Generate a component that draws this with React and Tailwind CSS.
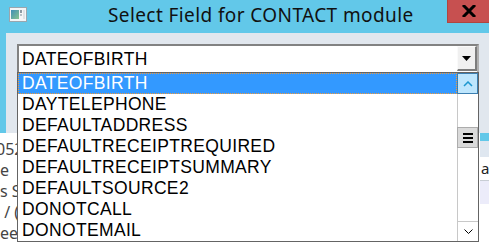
import React from 'react';

const FIELDS = [
  'DATEOFBIRTH',
  'DAYTELEPHONE',
  'DEFAULTADDRESS',
  'DEFAULTRECEIPTREQUIRED',
  'DEFAULTRECEIPTSUMMARY',
  'DEFAULTSOURCE2',
  'DONOTCALL',
  'DONOTEMAIL',
];

const BEHIND = ['052', 'e', 's S', ' / (', 'ee'];

function WindowIcon() {
  return (
    <svg width="18" height="15" viewBox="0 0 18 15">
      <rect x="0.5" y="0.5" width="17" height="14" fill="#f3f5f7" stroke="#9aa6ae" />
      <defs>
        <linearGradient id="g" x1="0" y1="0" x2="1" y2="1">
          <stop offset="0" stopColor="#3f8fb8" />
          <stop offset="1" stopColor="#86c48f" />
        </linearGradient>
      </defs>
      <rect x="2" y="3" width="8" height="9" fill="url(#g)" />
      <rect x="11" y="3" width="2" height="3" fill="#8c9aa3" />
      <rect x="11" y="7" width="2" height="2" fill="#b7c2c8" />
      <rect x="14" y="3" width="2" height="9" fill="#dde3e7" />
    </svg>
  );
}

export default function App() {
  return (
    <div className="relative w-[489px] h-[244px] overflow-hidden bg-white font-['Liberation_Sans',Arial,sans-serif]">
      {/* Dialog */}
      <div className="h-[133px] flex flex-col bg-[#62c8e9]">
        <div className="h-[33px] flex items-start">
          <div className="mt-[7px] ml-[9px]"><WindowIcon /></div>
          <span className="ml-[81px] leading-[30px] text-[19px] tracking-[0.4px] text-[#111] font-['Noto_Sans',sans-serif]">
            Select Field for CONTACT module
          </span>
          <div className="ml-auto w-[42px] h-[23px] bg-[#c75050] border-l border-b border-[#b04640] flex items-center justify-center">
            <svg width="14" height="12" viewBox="0 0 14 12">
              <path d="M2 1 L12 11 M12 1 L2 11" stroke="#000" strokeWidth="3" strokeLinecap="square" />
            </svg>
          </div>
        </div>
        <div className="flex flex-1">
          <div className="w-[6px]" />
          <div className="flex-1 bg-[#e1e7ee] pl-[11px] pt-[11px]">
            <div className="w-[462px] h-[28px] bg-white border-t-2 border-l-2 border-r-2 border-[#828282] border-r-[#b0b0b0] flex items-center">
              <span className="pl-[3px] text-[17.5px] tracking-[0.35px] text-black">DATEOFBIRTH</span>
              <div className="ml-auto mb-[1px] w-[20px] h-[25px] bg-[#f0f0f0] border-t border-l border-[#fafafa] border-r-2 border-b-2 border-r-[#7c7c7c] border-b-[#7c7c7c] flex items-center justify-center">
                <svg width="9" height="5" viewBox="0 0 9 5"><path d="M0 0 H9 L4.5 5 Z" fill="#000" /></svg>
              </div>
            </div>
          </div>
        </div>
      </div>

      {/* Application behind the dialog */}
      <div className="flex h-[111px]">
        <div className="w-[17px] overflow-hidden pt-[6px] text-[16px] leading-[21px] text-[#444] font-['Noto_Sans',sans-serif] whitespace-pre">
          {BEHIND.map((t, i) => (
            <div key={i} className={i === 0 ? '-ml-[4px]' : ''}>{t}</div>
          ))}
        </div>
        <div className="flex-1" />
        <div className="w-[9px] flex flex-col">
          <div className="h-[8px] bg-[#62c8e9]" />
          <div className="h-[16px] bg-[#dfe7f0]" />
          <div className="h-[24px] border-b border-[#c8cdd4] flex items-center text-[15px] text-[#222] font-['Noto_Sans',sans-serif]">
            <span className="ml-[1px]">a</span><span className="w-[2px] h-[15px] bg-[#8b1a1a] ml-[1px]" />
          </div>
          <div className="h-[23px] bg-[#ececfa]" />
        </div>
      </div>

      {/* Dropdown list */}
      <div className="absolute left-[17px] top-[72px] w-[462px] h-[170px] bg-white border border-[#646464] flex">
        <div className="flex-1">
          {FIELDS.map((f, i) => (
            <div
              key={f}
              className={
                i === 0
                  ? 'h-[21px] leading-[19px] pl-[3px] bg-[#3399ff] text-white border border-dotted border-[#f29a3a] text-[17.5px] tracking-[0.35px]'
                  : 'h-[21px] leading-[21px] pl-[4px] text-black text-[17.5px] tracking-[0.35px]'
              }
            >
              {f}
            </div>
          ))}
        </div>
        <div className="w-[21px] flex flex-col">
          <div className="h-[21px] bg-[#bee6fd] border border-[#3c7fb1] flex items-center justify-center">
            <svg width="10" height="6" viewBox="0 0 10 6"><path d="M1 5 L5 1 L9 5" fill="none" stroke="#1c97cf" strokeWidth="1.5" /></svg>
          </div>
          <div className="flex-1 flex flex-col border-l border-[#c8c8c8]">
            <div className="mt-[33px] h-[21px] bg-[#dadada] border border-[#acacac] -ml-px flex flex-col items-center justify-center gap-[2px]">
              <div className="w-[10px] h-[2px] bg-black" />
              <div className="w-[10px] h-[2px] bg-black" />
              <div className="w-[10px] h-[2px] bg-black" />
            </div>
            <div className="flex-1" />
            <div className="h-[20px] border-t border-[#c8c8c8] flex items-center justify-center">
              <svg width="9" height="5" viewBox="0 0 9 5"><path d="M0.5 0.5 L4.5 4.5 L8.5 0.5" fill="none" stroke="#000" strokeWidth="1" /></svg>
            </div>
          </div>
        </div>
      </div>
    </div>
  );
}
